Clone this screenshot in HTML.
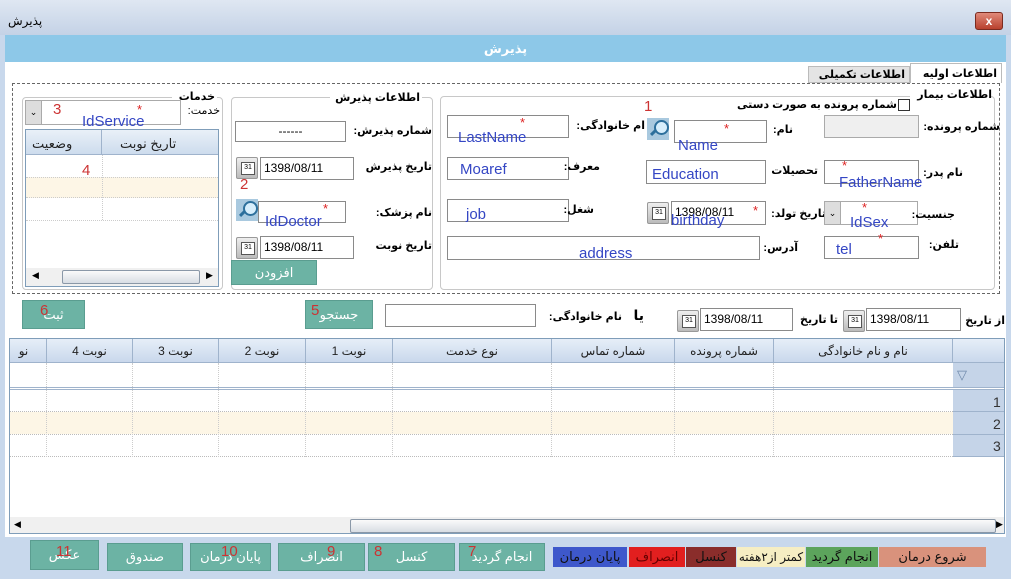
<!DOCTYPE html>
<html><head><meta charset="utf-8"><style>
*{box-sizing:border-box;margin:0;padding:0}
body{width:1011px;height:579px;overflow:hidden;background:#c8d8ec;font-family:"Liberation Sans","DejaVu Sans",sans-serif;font-size:12px;position:relative}
.a{position:absolute}
.inp{position:absolute;background:#fff;border:1px solid #8a8a8a}
.lb{position:absolute;font-weight:bold;font-size:11px;color:#000;white-space:nowrap;direction:rtl}
.bl{position:absolute;color:#3446c4;font-size:15px;white-space:nowrap}
.rd{position:absolute;color:#d22;font-size:13px}
.rn{position:absolute;color:#c33;font-size:15px}
.cal{position:absolute;width:22px;height:22px;background:linear-gradient(#eee,#bbb);border:1px solid #999;border-radius:2px}
.cal:after{content:"31";position:absolute;left:4px;top:4px;width:12px;height:11px;border:1px solid #555;font-size:7px;line-height:10px;text-align:center;background:#fff}
.mag{position:absolute;width:22px;height:22px;background:#a9c9df}
.mag:before{content:"";position:absolute;left:7px;top:2px;width:11px;height:11px;border:2px solid #2c6f9c;border-radius:50%;background:#d7eefc}
.mag:after{content:"";position:absolute;left:3px;top:13px;width:7px;height:3px;background:#2c6f9c;transform:rotate(-45deg)}
.btn{position:absolute;background:#6cb3a4;color:#fff;font-size:13px;text-align:center;border:1px solid #5a9d90;white-space:nowrap}
.dt{font-size:12px;padding-left:3px;line-height:20px}
.grp{position:absolute;border:1px solid #c8c8c8;border-radius:4px}
.th{position:absolute;top:0;height:24px;line-height:24px;text-align:center;font-size:12px;color:#222;border-left:1px solid #9fb3cc}
.lg{position:absolute;top:547px;height:20px;color:#111;text-align:center;line-height:20px;font-size:13px;white-space:nowrap;overflow:hidden}
</style></head><body>
<div class="a" style="left:0;top:0;width:1011px;height:35px;background:linear-gradient(#dfe7f2,#c4d2e6)"></div>
<div class="lb" style="left:8px;top:14px;font-weight:normal;font-size:12px">پذیرش</div>
<div class="a" style="left:975px;top:12px;width:28px;height:18px;background:linear-gradient(#e08a7a,#b8412e);border:1px solid #7a2b20;border-radius:3px;color:#fff;font-weight:bold;text-align:center;line-height:16px">x</div>
<div class="a" style="left:5px;top:35px;width:1001px;height:27px;background:#8dc8e8;color:#fff;text-align:center;line-height:27px;font-size:13px;font-weight:bold">پذیرش</div>
<div class="a" style="left:5px;top:62px;width:1001px;height:475px;background:#fff"></div>
<div class="a" style="left:910px;top:63px;width:92px;height:20px;background:#fff;border:1px solid #bbb;border-bottom:none"></div>
<div class="lb" style="right:14px;top:67px">اطلاعات اولیه</div>
<div class="a" style="left:808px;top:66px;width:102px;height:17px;background:#e4e4e4;border:1px solid #bbb"></div>
<div class="lb" style="right:106px;top:68px">اطلاعات تکمیلی</div>
<div class="a" style="left:12px;top:83px;width:988px;height:211px;border:1px dashed #666"></div>

<div class="grp" style="left:440px;top:96px;width:555px;height:194px"></div>
<div class="a" style="left:910px;top:89px;width:80px;height:12px;background:#fff"></div>
<div class="lb" style="right:19px;top:88px">اطلاعات بیمار</div>
<div class="a" style="left:898px;top:99px;width:12px;height:12px;border:1px solid #333;background:#fff"></div>
<div class="lb" style="right:114px;top:98px">شماره پرونده به صورت دستی</div>
<div class="inp" style="left:824px;top:115px;width:95px;height:23px;background:#efefef;border-color:#aaa"></div>
<div class="lb" style="right:11px;top:120px">شماره پرونده:</div>
<div class="inp" style="left:674px;top:120px;width:93px;height:23px"></div><div class="rd" style="left:724px;top:121px">*</div>
<div class="lb" style="right:218px;top:123px">نام:</div>
<div class="mag" style="left:647px;top:118px"></div>
<div class="lb" style="right:366px;top:119px">ام خانوادگی:</div>
<div class="inp" style="left:447px;top:115px;width:122px;height:23px"></div><div class="rd" style="left:520px;top:115px">*</div>
<div class="rn" style="left:644px;top:98px">1</div>
<div class="bl" style="left:458px;top:129px">LastName</div>
<div class="bl" style="left:678px;top:137px">Name</div>

<div class="inp" style="left:447px;top:157px;width:122px;height:23px"></div>
<div class="lb" style="right:411px;top:160px">معرف:</div>
<div class="inp" style="left:646px;top:160px;width:120px;height:24px"></div>
<div class="lb" style="right:193px;top:164px">تحصیلات</div>
<div class="inp" style="left:824px;top:160px;width:95px;height:24px"></div><div class="rd" style="left:842px;top:158px">*</div>
<div class="lb" style="right:48px;top:166px">نام پدر:</div>
<div class="bl" style="left:460px;top:161px">Moaref</div>
<div class="bl" style="left:652px;top:166px">Education</div>
<div class="bl" style="left:839px;top:174px">FatherName</div>

<div class="inp" style="left:447px;top:199px;width:122px;height:23px"></div>
<div class="lb" style="right:417px;top:203px">شغل:</div>
<div class="cal" style="left:647px;top:202px"></div>
<div class="inp dt" style="left:671px;top:201px;width:95px;height:24px">1398/08/11</div><div class="rd" style="left:753px;top:203px">*</div>
<div class="lb" style="right:185px;top:207px">تاریخ تولد:</div>
<div class="inp" style="left:824px;top:201px;width:94px;height:24px;border-color:#aaa"></div>
<div class="a" style="left:825px;top:202px;width:16px;height:22px;background:#ddd;border-right:1px solid #aaa;font-size:9px;text-align:center;line-height:22px">⌄</div>
<div class="rd" style="left:862px;top:200px">*</div>
<div class="lb" style="right:56px;top:208px">جنسیت:</div>
<div class="bl" style="left:466px;top:206px">job</div>
<div class="bl" style="left:671px;top:212px">birthday</div>
<div class="bl" style="left:850px;top:214px">IdSex</div>

<div class="inp" style="left:447px;top:236px;width:313px;height:24px"></div>
<div class="lb" style="right:213px;top:241px">آدرس:</div>
<div class="inp" style="left:824px;top:236px;width:95px;height:23px"></div><div class="rd" style="left:878px;top:231px">*</div>
<div class="lb" style="right:52px;top:238px">تلفن:</div>
<div class="bl" style="left:579px;top:245px">address</div>
<div class="bl" style="left:836px;top:241px">tel</div>

<div class="grp" style="left:231px;top:97px;width:202px;height:193px"></div>
<div class="a" style="left:330px;top:91px;width:92px;height:12px;background:#fff"></div>
<div class="lb" style="right:591px;top:91px">اطلاعات پذیرش</div>
<div class="inp" style="left:235px;top:121px;width:111px;height:21px;text-align:center;line-height:18px">------</div>
<div class="lb" style="right:579px;top:124px">شماره پذیرش:</div>
<div class="cal" style="left:236px;top:157px"></div>
<div class="inp dt" style="left:260px;top:157px;width:94px;height:23px">1398/08/11</div>
<div class="lb" style="right:579px;top:160px">تاریخ پذیرش</div>
<div class="rn" style="left:240px;top:176px">2</div>
<div class="mag" style="left:236px;top:199px"></div>
<div class="inp" style="left:258px;top:201px;width:88px;height:22px"></div><div class="rd" style="left:323px;top:201px">*</div>
<div class="lb" style="right:579px;top:206px">نام پزشک:</div>
<div class="bl" style="left:265px;top:213px">IdDoctor</div>
<div class="cal" style="left:236px;top:237px"></div>
<div class="inp dt" style="left:260px;top:236px;width:94px;height:23px">1398/08/11</div>
<div class="lb" style="right:579px;top:239px">تاریخ نوبت</div>
<div class="btn" style="left:231px;top:260px;width:86px;height:25px;line-height:23px">افزودن</div>

<div class="grp" style="left:22px;top:97px;width:201px;height:193px"></div>
<div class="a" style="left:172px;top:91px;width:45px;height:12px;background:#fff"></div>
<div class="lb" style="right:796px;top:90px">خدمات</div>
<div class="lb" style="right:791px;top:104px;font-weight:normal">خدمت:</div>
<div class="inp" style="left:25px;top:100px;width:156px;height:25px;border-color:#aaa"></div>
<div class="a" style="left:26px;top:101px;width:16px;height:23px;background:#ddd;border-right:1px solid #aaa;font-size:9px;text-align:center;line-height:22px">⌄</div>
<div class="rn" style="left:53px;top:101px">3</div><div class="rd" style="left:137px;top:102px">*</div>
<div class="bl" style="left:82px;top:113px">IdService</div>
<div class="a" style="left:25px;top:129px;width:194px;height:158px;border:1px solid #7f9db9;background:#fff"></div>
<div class="a" style="left:26px;top:130px;width:192px;height:25px;background:linear-gradient(#e9f0f8,#cddced);border-bottom:1px solid #9fb3cc"></div>
<div class="a" style="left:101px;top:130px;width:1px;height:25px;background:#9fb3cc"></div>
<div class="a" style="left:120px;top:136px;font-size:13px;color:#222">تاریخ نوبت</div>
<div class="a" style="left:32px;top:136px;font-size:13px;color:#222">وضعیت</div>
<div class="a" style="left:26px;top:177px;width:192px;height:21px;background:#fdf6e6;border-top:1px dotted #ccc;border-bottom:1px dotted #ccc"></div>
<div class="a" style="left:26px;top:220px;width:192px;height:1px;border-top:1px dotted #ccc"></div>
<div class="a" style="left:102px;top:155px;width:1px;height:65px;border-left:1px dotted #ccc"></div>
<div class="rn" style="left:82px;top:162px">4</div>
<div class="a" style="left:26px;top:268px;width:192px;height:18px;background:#f0f0f0"></div>
<div class="a" style="left:62px;top:270px;width:138px;height:14px;background:linear-gradient(#fafafa,#d8dde4);border:1px solid #8a98a8;border-radius:2px"></div>
<div class="a" style="left:32px;top:270px;font-size:9px">◀</div><div class="a" style="left:206px;top:270px;font-size:9px">▶</div>

<div class="btn" style="left:22px;top:300px;width:63px;height:29px;line-height:27px">ثبت</div><div class="rn" style="left:40px;top:302px">6</div>
<div class="btn" style="left:305px;top:300px;width:68px;height:29px;line-height:27px">جستجو</div><div class="rn" style="left:311px;top:302px">5</div>
<div class="inp" style="left:385px;top:304px;width:151px;height:23px"></div>
<div class="lb" style="right:389px;top:310px">نام خانوادگی:</div>
<div class="lb" style="right:367px;top:307px;font-size:14px">یا</div>
<div class="cal" style="left:677px;top:310px"></div>
<div class="inp dt" style="left:700px;top:308px;width:93px;height:23px">1398/08/11</div>
<div class="lb" style="right:173px;top:313px">تا تاریخ</div>
<div class="cal" style="left:843px;top:310px"></div>
<div class="inp dt" style="left:866px;top:308px;width:95px;height:23px">1398/08/11</div>
<div class="lb" style="right:6px;top:314px">از تاریخ</div>

<div class="a" style="left:9px;top:338px;width:996px;height:196px;border:1px solid #7f9db9;background:#fff;overflow:hidden">
 <div class="a" style="left:0;top:0;width:996px;height:24px;background:linear-gradient(#e6eef8,#c9d8ec);border-bottom:1px solid #9fb3cc"></div>
 <div class="th" style="left:-10px;width:46px">نو</div>
 <div class="th" style="left:36px;width:86px">نوبت 4</div>
 <div class="th" style="left:122px;width:86px">نوبت 3</div>
 <div class="th" style="left:208px;width:87px">نوبت 2</div>
 <div class="th" style="left:295px;width:87px">نوبت 1</div>
 <div class="th" style="left:382px;width:159px">نوع خدمت</div>
 <div class="th" style="left:541px;width:123px">شماره تماس</div>
 <div class="th" style="left:664px;width:99px">شماره پرونده</div>
 <div class="th" style="left:763px;width:180px;border-right:1px solid #9fb3cc">نام و نام خانوادگی</div>
 <div class="a" style="left:943px;top:24px;width:52px;height:24px;background:#c5d4e8;color:#6d88aa;font-size:13px;padding:4px 0 0 4px">▽</div>
 <div class="a" style="left:0;top:48px;width:996px;height:3px;border-top:1px solid #9fb3cc;border-bottom:1px solid #9fb3cc"></div>
 <div class="a" style="left:0;top:73px;width:943px;height:22px;background:#fdf6e6"></div>
 <div class="a" style="left:0;top:72px;width:943px;border-top:1px dotted #bbb"></div>
 <div class="a" style="left:0;top:95px;width:943px;border-top:1px dotted #bbb"></div>
 <div class="a" style="left:0;top:117px;width:943px;border-top:1px dotted #bbb"></div>
 <div class="a" style="left:943px;top:51px;width:52px;height:66px;background:#c5d4e8"></div>
 <div class="a" style="left:943px;top:72px;width:52px;border-top:1px solid #9fb3cc"></div>
 <div class="a" style="left:943px;top:95px;width:52px;border-top:1px solid #9fb3cc"></div>
 <div class="a" style="left:943px;top:117px;width:52px;border-top:1px solid #9fb3cc"></div>
 <div class="a" style="left:983px;top:55px;font-size:14px;color:#333">1</div>
 <div class="a" style="left:983px;top:77px;font-size:14px;color:#333">2</div>
 <div class="a" style="left:983px;top:99px;font-size:14px;color:#333">3</div>
 <div class="a" style="left:36px;top:24px;height:94px;border-left:1px dotted #ccc"></div>
 <div class="a" style="left:122px;top:24px;height:94px;border-left:1px dotted #ccc"></div>
 <div class="a" style="left:208px;top:24px;height:94px;border-left:1px dotted #ccc"></div>
 <div class="a" style="left:295px;top:24px;height:94px;border-left:1px dotted #ccc"></div>
 <div class="a" style="left:382px;top:24px;height:94px;border-left:1px dotted #ccc"></div>
 <div class="a" style="left:541px;top:24px;height:94px;border-left:1px dotted #ccc"></div>
 <div class="a" style="left:664px;top:24px;height:94px;border-left:1px dotted #ccc"></div>
 <div class="a" style="left:763px;top:24px;height:94px;border-left:1px dotted #ccc"></div>
 <div class="a" style="left:0;top:178px;width:996px;height:17px;background:#f0f0f0"></div>
 <div class="a" style="left:340px;top:180px;width:646px;height:14px;background:linear-gradient(#fafafa,#d8dde4);border:1px solid #8a98a8;border-radius:2px"></div>
 <div class="a" style="left:4px;top:180px;font-size:9px">◀</div><div class="a" style="left:986px;top:180px;font-size:9px">▶</div>
</div>

<div class="btn" style="left:30px;top:540px;width:69px;height:30px;line-height:28px">عکس</div><div class="rn" style="left:56px;top:543px">11</div>
<div class="btn" style="left:107px;top:543px;width:76px;height:28px;line-height:26px">صندوق</div>
<div class="btn" style="left:190px;top:543px;width:81px;height:28px;line-height:26px">پایان درمان</div><div class="rn" style="left:221px;top:543px">10</div>
<div class="btn" style="left:278px;top:543px;width:87px;height:28px;line-height:26px">انصراف</div><div class="rn" style="left:327px;top:543px">9</div>
<div class="btn" style="left:368px;top:543px;width:87px;height:28px;line-height:26px">کنسل</div><div class="rn" style="left:374px;top:543px">8</div>
<div class="btn" style="left:459px;top:543px;width:86px;height:28px;line-height:26px">انجام گردید</div><div class="rn" style="left:468px;top:543px">7</div>
<div class="lg" style="left:553px;width:74px;background:#3e58cb">پایان درمان</div>
<div class="lg" style="left:629px;width:56px;background:#e21f1f;color:#600">انصراف</div>
<div class="lg" style="left:686px;width:50px;background:#8a2d2b">کنسل</div>
<div class="lg" style="left:737px;width:68px;background:#f6eec3;font-size:12px;direction:rtl">کمتر از۲هفته</div>
<div class="lg" style="left:806px;width:72px;background:#5ca45c">انجام گردید</div>
<div class="lg" style="left:879px;width:107px;background:#d9927c">شروع درمان</div>
</body></html>
